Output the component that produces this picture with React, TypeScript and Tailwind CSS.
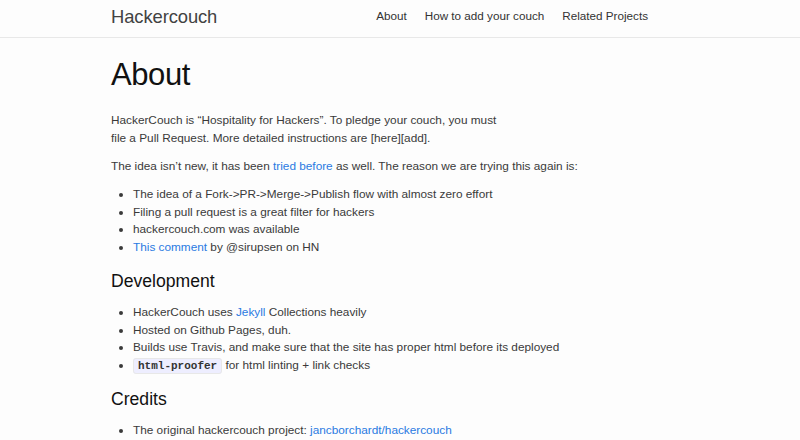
const linkClass = "text-[#2a7ae2]";

function Bullet({ children }: { children: React.ReactNode }) {
    return <li className="leading-[17.7px]">{children}</li>;
}

export default function App() {
    return (
        <div className="min-h-[440px] bg-[#fdfdfd] font-['Liberation_Sans',Arial,sans-serif] text-[#3a3a3a]">
            <header className="h-[38px] border-b border-[#e8e8e8]">
                <div className="ml-[111px] w-[537px] flex items-center justify-between h-full">
                    <a className="text-[18.4px] text-[#424242] tracking-[-0.1px] leading-none pb-[3px]">
                        Hackercouch
                    </a>
                    <nav className="flex gap-[18px] text-[11.7px] text-[#333] pb-[5px]">
                        <a>About</a>
                        <a>How to add your couch</a>
                        <a>Related Projects</a>
                    </nav>
                </div>
            </header>

            <main className="ml-[111px] w-[560px] pt-[16px] text-[11.8px]">
                <h1 className="text-[31px] text-[#111] leading-[42px] tracking-[-0.4px] mb-[15px]">
                    About
                </h1>

                <p className="leading-[18px] mb-[10px]">
                    HackerCouch is “Hospitality for Hackers”. To pledge your
                    couch, you must
                    <br />
                    file a Pull Request. More detailed instructions are
                    [here][add].
                </p>

                <p className="leading-[18px] mb-[11px]">
                    The idea isn’t new, it has been{" "}
                    <a className={linkClass}>tried before</a> as well. The
                    reason we are trying this again is:
                </p>

                <ul className="list-disc pl-[22px] mb-[11px]">
                    <Bullet>
                        The idea of a Fork-&gt;PR-&gt;Merge-&gt;Publish flow
                        with almost zero effort
                    </Bullet>
                    <Bullet>Filing a pull request is a great filter for hackers</Bullet>
                    <Bullet>hackercouch.com was available</Bullet>
                    <Bullet>
                        <a className={linkClass}>This comment</a> by @sirupsen
                        on HN
                    </Bullet>
                </ul>

                <h2 className="text-[17.6px] text-[#111] leading-[24px] mt-[12px] mb-[11px]">
                    Development
                </h2>

                <ul className="list-disc pl-[22px] mb-[11px]">
                    <Bullet>
                        HackerCouch uses <a className={linkClass}>Jekyll</a>{" "}
                        Collections heavily
                    </Bullet>
                    <Bullet>Hosted on Github Pages, duh.</Bullet>
                    <Bullet>
                        Builds use Travis, and make sure that the site has
                        proper html before its deployed
                    </Bullet>
                    <Bullet>
                        <code className="font-['Liberation_Mono',monospace] font-bold text-[11px] text-[#333] bg-[#eef] border border-[#e8e8e8] rounded-[3px] px-[4px] py-[1px]">
                            html-proofer
                        </code>{" "}
                        for html linting + link checks
                    </Bullet>
                </ul>

                <h2 className="text-[17.6px] text-[#111] leading-[24px] mt-[11px] mb-[11px]">
                    Credits
                </h2>

                <ul className="list-disc pl-[22px]">
                    <Bullet>
                        The original hackercouch project:{" "}
                        <a className={linkClass}>jancborchardt/hackercouch</a>
                    </Bullet>
                </ul>
            </main>
        </div>
    );
}
